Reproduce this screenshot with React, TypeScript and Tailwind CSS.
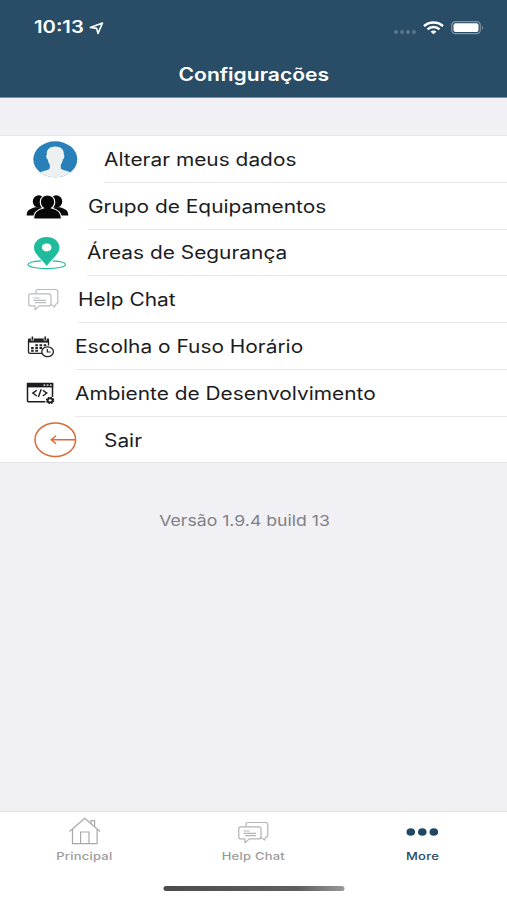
import type { ReactNode } from 'react';
import clsx from 'clsx';

interface SettingsItem {
    label: string;
    icon: ReactNode;
    iconBox: string;
}

const ITEMS: SettingsItem[] = [
    { label: 'Alterar meus dados', icon: <AvatarIcon />, iconBox: 'pl-[33px] w-[104px]' },
    { label: 'Grupo de Equipamentos', icon: <GroupIcon />, iconBox: 'pl-[26px] w-[88px]' },
    { label: 'Áreas de Segurança', icon: <PinIcon />, iconBox: 'pl-[27px] w-[87px]' },
    { label: 'Help Chat', icon: <ChatIcon className="text-[#b9bbbd]" />, iconBox: 'pl-[27.5px] w-[77.5px]' },
    { label: 'Escolha o Fuso Horário', icon: <CalendarIcon />, iconBox: 'pl-[27px] w-[74.5px]' },
    { label: 'Ambiente de Desenvolvimento', icon: <CodeIcon />, iconBox: 'pl-[26px] w-[75px]' },
    { label: 'Sair', icon: <ExitIcon />, iconBox: 'pl-[34px] w-[104px]' },
];

export default function App() {
    return (
        <div className="flex h-[900px] w-[507px] flex-col overflow-hidden bg-[#f0f0f5] font-['Inter','Liberation_Sans',sans-serif]">
            <header className="h-[98px] shrink-0 border-b border-[#7892a8] bg-[#294d66] text-white">
                <StatusBar />
                <h1 className="flex h-[40px] items-center justify-center text-[18px] font-semibold">
                    <span className="translate-x-[0.5px] scale-x-[1.17]">Configurações</span>
                </h1>
            </header>

            <main className="flex-1">
                <div className="mt-[37px] h-[328px] border-y border-[#e6e6ea] bg-white">
                    {ITEMS.map((item, i) => (
                        <SettingsRow key={item.label} item={item} last={i === ITEMS.length - 1} />
                    ))}
                </div>
                <p className="mt-[48px] flex justify-center text-[15px] leading-[20px] text-[#808085]">
                    <span className="-translate-x-[9px] scale-x-[1.175]">Versão 1.9.4 build 13</span>
                </p>
            </main>

            <TabBar />
        </div>
    );
}

function StatusBar() {
    return (
        <div className="flex h-[54px] items-center justify-between pr-[23px] pl-[34px]">
            <div className="flex items-center pt-[2px]">
                <span className="w-[55px] text-[17px] font-semibold">
                    <span className="inline-block origin-left scale-x-[1.19]">10:13</span>
                </span>
                <svg width="15" height="13" viewBox="0 0 15 13" fill="none" stroke="currentColor" strokeWidth="1.6" strokeLinejoin="round">
                    <path d="M13.5 1 9 11.4 7.6 6.4 1.4 5.4Z" />
                </svg>
            </div>
            <div className="flex items-center pt-[1px]">
                <div className="mt-[9px] mr-[7px] flex gap-[2px]">
                    {[0, 1, 2, 3].map(n => (
                        <span key={n} className="h-[4px] w-[4px] rounded-full bg-[#587589]" />
                    ))}
                </div>
                <svg width="21" height="14" viewBox="0 0 21 14" fill="none" stroke="currentColor" strokeWidth="2.4">
                    <path d="M1 5.2C6 .2 15 .2 20 5.2" />
                    <path d="M4.5 8.4c3.2-3.2 8.8-3.2 12 0" />
                    <path d="M7.6 10.7c1.6-1.6 4.2-1.6 5.8 0l-2.9 2.6Z" fill="currentColor" stroke="none" />
                </svg>
                <svg className="ml-[7px]" width="33" height="14" viewBox="0 0 33 14">
                    <rect x=".7" y=".7" width="28.6" height="12" rx="3.6" fill="none" stroke="#8096a6" strokeWidth="1.2" />
                    <rect x="2.5" y="2.3" width="25" height="8.8" rx="2" fill="white" />
                    <path d="M31 4.7c1.6.8 1.6 3.2 0 4Z" fill="#8096a6" />
                </svg>
            </div>
        </div>
    );
}

function SettingsRow({ item, last }: { item: SettingsItem; last: boolean }) {
    return (
        <div className="flex h-[46.8px]">
            <div className={clsx('flex shrink-0 items-center', item.iconBox)}>{item.icon}</div>
            <div className={clsx('flex flex-1 items-center pt-[1px] text-[18px] whitespace-nowrap text-[#1c1c1e]', !last && 'border-b border-[#e8e8eb]')}>
                <span className="origin-left scale-x-[1.16]">{item.label}</span>
            </div>
        </div>
    );
}

function TabBar() {
    return (
        <nav className="flex h-[89px] shrink-0 flex-col border-t border-[#e2e2e5] bg-white">
            <div className="grid h-[74px] grid-cols-3 text-[#9b9b9b]">
                <Tab label="Principal" icon={<HomeIcon />} />
                <Tab label="Help Chat" icon={<ChatIcon className="text-[#b3b3b3]" />} />
                <Tab label="More" icon={<DotsIcon />} active />
            </div>
            <div className="mx-auto h-[5px] w-[181px] translate-x-[0.5px] rounded-full bg-gradient-to-r from-[#4c4c4c] via-[#606060] via-75% to-[#9a9a9a]" />
        </nav>
    );
}

function Tab({ label, icon, active }: { label: string; icon: ReactNode; active?: boolean }) {
    return (
        <div className={clsx('flex flex-col items-center', active && 'text-[#24486a]')}>
            <div className="flex h-[38px] items-center pt-[3px]">{icon}</div>
            <span className="-translate-x-[0.5px] scale-x-[1.18] text-[11px] leading-[13px] font-medium tracking-[0.2px]">{label}</span>
        </div>
    );
}

function AvatarIcon() {
    return (
        <svg width="45" height="37" viewBox="0 0 45 37">
            <clipPath id="avatar">
                <ellipse cx="22.3" cy="18.3" rx="22" ry="18" />
            </clipPath>
            <g clipPath="url(#avatar)">
                <rect width="45" height="37" fill="#2980b9" />
                <path
                    d="M22.3 5.5c-5.8 0-9 3.2-8.5 8.2-1 .4-.6 4.3 1 4.8.4 2.4 1.1 4 2 5.1v3.7C15.3 30 9 29.8 6 32.2v5h33v-5c-3-2.4-9.4-2.2-11.2-4.9v-3.7c.9-1.1 1.6-2.7 2-5.1 1.6-.5 2-4.4 1-4.8.5-5-2.7-8.2-8.5-8.2Z"
                    fill="#ecf0f1"
                />
            </g>
        </svg>
    );
}

function GroupIcon() {
    return (
        <svg className="mt-[1px]" width="43" height="26" viewBox="0 0 43 26" fill="#080808">
            <ellipse cx="12.8" cy="7.5" rx="6" ry="6.2" />
            <ellipse cx="30.2" cy="7.5" rx="6" ry="6.2" />
            <path d="M.7 21.5c0-4.7 2.3-6.5 8.2-8.3h7v8.3ZM42.3 21.5c0-4.7-2.3-6.5-8.2-8.3h-7v8.3Z" />
            <path
                d="M21.5 1c-4.2 0-7.2 2.8-7.2 6.8 0 2.8 1.2 5 3 6.2-6.4 1.6-9.8 4.3-9.8 11h28c0-6.7-3.4-9.4-9.8-11 1.8-1.2 3-3.4 3-6.2 0-4-3-6.8-7.2-6.8Z"
                stroke="white"
                strokeWidth="1.2"
            />
        </svg>
    );
}

function PinIcon() {
    return (
        <svg width="40" height="34" viewBox="0 0 40 34">
            <path
                d="M14 24.8C6 25.2 1 26.7 1 28.6c0 2.3 8.3 4 18.7 4s18.8-1.7 18.8-4c0-1.9-5.2-3.4-13-3.8"
                fill="none"
                stroke="#1fbc9c"
                strokeWidth="1.2"
            />
            <path
                d="M19.7 1C12.2 1 7 5.7 7 11.8 7 17.5 13 21.2 19.7 30c6.7-8.8 12.7-12.5 12.7-18.2C32.4 5.7 27.2 1 19.7 1Zm0 6.6c2.8 0 4.8 1.6 4.8 3.9s-2 3.9-4.8 3.9-4.8-1.6-4.8-3.9 2-3.9 4.8-3.9Z"
                fill="#1fbc9c"
                fillRule="evenodd"
            />
        </svg>
    );
}

function ChatIcon({ className }: { className?: string }) {
    return (
        <svg className={className} width="31" height="24" viewBox="0 0 31 24" fill="none" stroke="currentColor" strokeWidth="1.2" strokeLinejoin="round">
            <path d="M8 5.5v-2c0-1.3.8-2 2.2-2h17.4c1.4 0 2.2.7 2.2 2v10.7c0 1.2-.8 1.9-2.2 1.9l-1.1 3-3.5-3" />
            <path d="M3 5.8h17.8c1.5 0 2.2.7 2.2 2v8.1c0 1.3-.7 2-2.2 2h-9.5l-4.2 3.9-.3-3.9H3c-1.4 0-2.2-.7-2.2-2V7.8c0-1.3.8-2 2.2-2Z" />
            <path d="M5.5 10h6M5.5 12.3h12.5M7 14.6h11" />
        </svg>
    );
}

function CalendarIcon() {
    return (
        <svg width="28" height="22" viewBox="0 0 28 22" fill="none" stroke="#222">
            <path d="M15 17.3H3c-1 0-1.5-.4-1.5-1.2V4.5c0-.8.5-1.2 1.5-1.2h17c1 0 1.5.4 1.5 1.2v5" strokeWidth="1.3" />
            <path d="M1.2 2.6h20.8v4H1.2Z" fill="#222" stroke="none" />
            <path d="M5.4.8v3.6M18.2.8v3.6" stroke="white" strokeWidth="3" />
            <path d="M5.4.5v3.6M18.2.5v3.6" strokeWidth="1.6" />
            <path d="M8.3 9.2h2.6M12.5 9.2h2.6M16.7 9.2h2.6M4.1 12h2.6M8.3 12h2.6M12.5 12h2.6M4.1 14.8h2.6M8.3 14.8h2.6" strokeWidth="2.1" />
            <ellipse cx="20.6" cy="15.8" rx="5.8" ry="4.9" fill="white" strokeWidth="1.3" />
            <path d="M20.3 12.9v3.1h3.3" strokeWidth="1.2" />
        </svg>
    );
}

function CodeIcon() {
    return (
        <svg width="29" height="23" viewBox="0 0 29 23" fill="none" stroke="#1d1d1f">
            <path d="M19.5 19.8H2.5c-.6 0-1-.4-1-1V1.5h25v13.5" strokeWidth="1.5" />
            <path d="M1 1h26.2v4.4H1Z" fill="#1d1d1f" stroke="none" />
            <path d="M17.5 3.1h1.8M20.7 3.1h1.8M23.9 3.1h1.8" stroke="white" strokeWidth="1.1" />
            <path d="m10.8 8.2-4 2.9 4 2.9M16.8 8.2l4 2.9-4 2.9M15.2 7.2l-2.8 7.8" strokeWidth="1.4" />
            <ellipse cx="24.1" cy="18.4" rx="4.8" ry="4" fill="white" stroke="none" />
            <ellipse cx="24.1" cy="18.4" rx="3.6" ry="3" strokeWidth="1.2" strokeDasharray="1.6 1" />
            <ellipse cx="24.1" cy="18.4" rx="2.5" ry="2" strokeWidth="1.9" />
        </svg>
    );
}

function ExitIcon() {
    return (
        <svg width="43" height="36" viewBox="0 0 43 36" fill="none" stroke="#db6b34" strokeWidth="1.5">
            <ellipse cx="21.3" cy="17.8" rx="20.3" ry="16.8" />
            <path d="M41.5 17.8H17.3M22 13.8l-4.7 4 4.7 4" />
        </svg>
    );
}

function HomeIcon() {
    return (
        <svg className="-mt-[3px]" width="33" height="28" viewBox="0 0 33 28" fill="none" stroke="#a8a8a8" strokeWidth="1.2">
            <path d="M1.5 14.5 16.8 1.3 32 14.5M4.5 12v14.6h24.6V12M12.6 26.6V15h8.4v11.6M23 6.5V3.6h3.6v6" />
        </svg>
    );
}

function DotsIcon() {
    return (
        <svg className="-mt-[2px]" width="33" height="8" viewBox="0 0 33 8" fill="#204866">
            <ellipse cx="4.8" cy="4" rx="4.3" ry="3.8" />
            <ellipse cx="16.3" cy="4" rx="4.3" ry="3.8" />
            <ellipse cx="27.8" cy="4" rx="4.3" ry="3.8" />
        </svg>
    );
}
